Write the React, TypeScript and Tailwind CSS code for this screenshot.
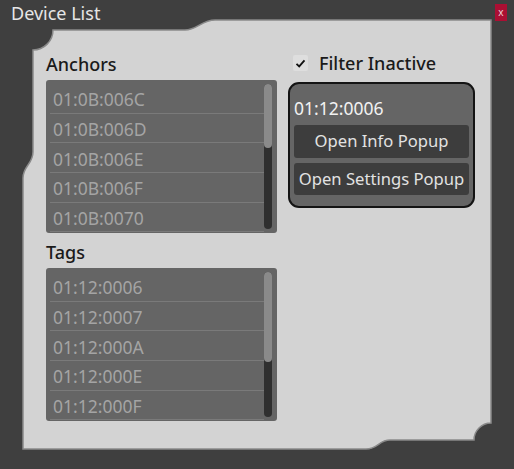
import React from "react";

const anchors = ["01:0B:006C", "01:0B:006D", "01:0B:006E", "01:0B:006F", "01:0B:0070"];
const tags = ["01:12:0006", "01:12:0007", "01:12:000A", "01:12:000E", "01:12:000F"];

function ListBox({ items, thumbTop, thumbH }: { items: string[]; thumbTop: number; thumbH: number }) {
  return (
    <div className="flex h-[153px] w-[231px] rounded-[3px] bg-[#656565] pl-[4px] pt-[4px]">
      <div className="flex min-w-0 flex-1 flex-col">
        {items.map((t) => (
          <div
            key={t}
            className="flex h-[29.7px] shrink-0 items-center border-b border-[#7a7a7a] pl-[3px] pt-[2px] text-[17.5px] text-[#a4a4a4]"
          >
            {t}
          </div>
        ))}
      </div>
      <div className="relative mr-[5px] h-[145px] w-[8px] rounded-full bg-[#2f2f2f]">
        <div
          className="absolute left-0 w-[8px] rounded-full bg-[#8a8a8a]"
          style={{ top: thumbTop, height: thumbH }}
        />
      </div>
    </div>
  );
}

export default function App() {
  return (
    <div
      className="relative h-[469px] w-[514px] overflow-hidden bg-[#3f3f3f]"
      style={{ fontFamily: '"Noto Sans", "Open Sans", sans-serif' }}
    >
      <svg className="absolute inset-0" width="514" height="469" viewBox="0 0 514 469">
        <path
          d="M 53 30 L 185 30 C 197 30 202 20 215 20 L 491 20 L 491 423 A 17 17 0 0 0 474 440 L 390 440 C 379 440 378 449 366 449 L 23 449 L 23 178 C 23 166 33 164 33 152 L 33 50 A 20 20 0 0 0 53 30 Z"
          fill="#d3d3d3"
          stroke="#8a8a8a"
          strokeWidth="1.5"
        />
      </svg>

      <div className="relative flex h-[25px] items-center justify-between pl-[11px] pr-[7px]">
        <span className="text-[18px] leading-[22px] text-[#e6e6e6]">Device List</span>
        <div className="flex h-[17px] w-[12px] items-center justify-center bg-[#ab0f33] pb-[2px] text-[10px] leading-none text-[#f0d0d8]">
          x
        </div>
      </div>

      <div className="relative flex gap-[11px] pl-[46px] pt-[28px]">
        <div className="flex w-[231px] flex-col">
          <div className="h-[22px] text-[18px] font-medium leading-[22px] text-[#1a1a1a]">Anchors</div>
          <div className="mt-[5px]">
            <ListBox items={anchors} thumbTop={0} thumbH={64} />
          </div>
          <div className="mt-[8px] h-[22px] text-[18px] font-medium leading-[22px] text-[#1a1a1a]">Tags</div>
          <div className="mt-[5px]">
            <ListBox items={tags} thumbTop={0} thumbH={90} />
          </div>
        </div>

        <div className="-mt-[1px] flex w-[187px] flex-col">
          <div className="flex h-[22px] items-center pl-[5px]">
            <div className="flex h-[16px] w-[15px] items-center justify-center rounded-[2px] bg-[#dedede]">
              <svg width="11" height="11" viewBox="0 0 11 11">
                <path d="M1.5 5.8 L4.2 8.4 L9.5 2.4" fill="none" stroke="#111" strokeWidth="1.8" />
              </svg>
            </div>
            <span className="ml-[11px] text-[18px] font-medium leading-[22px] text-[#1a1a1a]">Filter Inactive</span>
          </div>
          <div className="mt-[8px] flex h-[126px] flex-col rounded-[11px] border-2 border-[#141414] bg-[#656565] px-[4px] pt-[13px]">
            <div className="h-[22px] text-[17.5px] leading-[22px] text-[#f2f2f2]">01:12:0006</div>
            <div className="mt-[6px] flex h-[33px] items-center justify-center rounded-[3px] bg-[#3d3d3d] text-[16.6px] text-[#e2e2e2]">
              Open Info Popup
            </div>
            <div className="mt-[5px] flex h-[32px] items-center justify-center rounded-[3px] bg-[#3d3d3d] text-[16.6px] text-[#e2e2e2]">
              Open Settings Popup
            </div>
          </div>
        </div>
      </div>
    </div>
  );
}
